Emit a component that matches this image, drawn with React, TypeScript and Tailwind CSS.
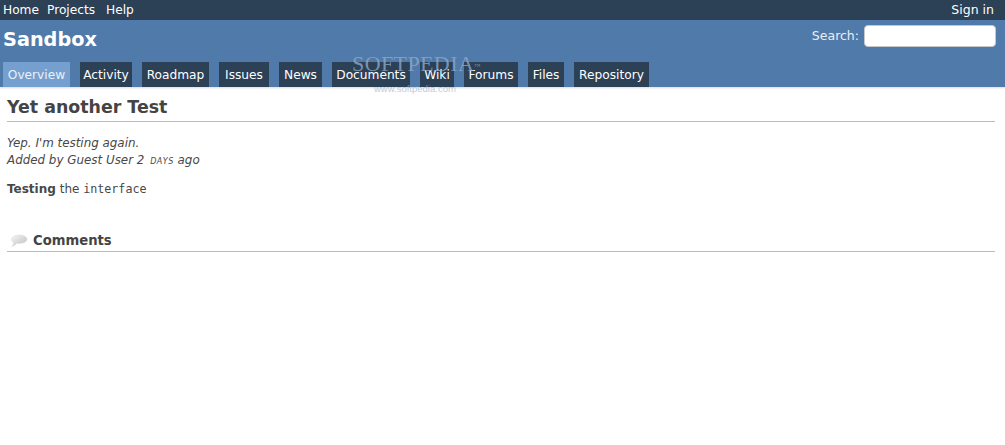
const TOP = [
  { label: "Home", width: "w-[44px]" },
  { label: "Projects", width: "w-[59px]" },
  { label: "Help", width: "w-[30px]" },
]

const TABS = [
  { label: "Overview", width: "w-[67px]", active: true },
  { label: "Activity", width: "w-[52px]" },
  { label: "Roadmap", width: "w-[67px]" },
  { label: "Issues", width: "w-[50px]" },
  { label: "News", width: "w-[43px]" },
  { label: "Documents", width: "w-[78px]" },
  { label: "Wiki", width: "w-[34px]" },
  { label: "Forums", width: "w-[54px]" },
  { label: "Files", width: "w-[36px]" },
  { label: "Repository", width: "w-[75px]" },
]

export default function App() {
  return (
    <div className="relative h-[445px] w-[1005px] overflow-hidden bg-white font-['DejaVu_Sans',sans-serif] text-[#484848]">
      {/* Top menu */}
      <div className="flex h-5 items-center justify-between bg-[#2c4056] pl-[3px] pr-[11px] text-[12.2px] text-white">
        <div className="flex">
          {TOP.map((t) => (
            <a key={t.label} className={t.width}>{t.label}</a>
          ))}
        </div>
        <a className="text-[12.5px]">Sign in</a>
      </div>

      {/* Header */}
      <div className="h-[67px] bg-[#507aaa] pl-[3px] text-white shadow-[0_1px_2px_rgba(0,0,0,0.15)]">
        <div className="flex h-[42px] items-start justify-between pr-[9px]">
          <h1 className="mt-[5px] text-[19.3px] font-bold leading-[30px]">Sandbox</h1>
          <div className="mt-[5px] flex items-center gap-[5px] text-[12.5px]">
            <span className="text-[#e8eef5]">Search:</span>
            <input className="h-[22px] w-[132px] rounded-[4px] border border-[#c8c8c8] bg-white" />
          </div>
        </div>
        <div className="flex gap-[10px]">
          {TABS.map((t) => (
            <a
              key={t.label}
              className={`flex h-[25px] items-center justify-center pt-[1px] text-[12.2px] ${t.width} ${
                t.active ? "bg-[#759fcf] text-[#eaf1f8]" : "bg-[#2c4056] text-white"
              }`}
            >
              {t.label}
            </a>
          ))}
        </div>
      </div>

      {/* Content */}
      <div className="px-[7px] pr-[10px]">
        <h2 className="mt-[8px] border-b border-[#bbb] pb-[2px] text-[17.4px] font-bold leading-[24px] text-[#444]">
          Yet another Test
        </h2>
        <p className="mt-[13px] text-[11.9px] italic leading-[17px]">Yep. I'm testing again.</p>
        <p className="text-[11.9px] italic leading-[17px]">
          Added by Guest User 2 <span className="ml-[2px] text-[8px] uppercase tracking-[0.5px]">days</span> ago
        </p>
        <p className="mt-[11px] text-[12px] leading-[17px]">
          <strong>Testing</strong> the <code className="font-['DejaVu_Sans_Mono',monospace] text-[11.7px]">interface</code>
        </p>
        <h3 className="mt-[34px] flex items-center gap-[5px] border-b border-[#bbb] pb-[1px] text-[13.2px] font-bold leading-[18px] text-[#444]">
          <svg width="18" height="14" viewBox="0 0 18 14" className="ml-[3px]">
            <defs>
              <linearGradient id="bubble" x1="0" y1="0" x2="1" y2="1">
                <stop offset="0" stopColor="#f6f6f6" />
                <stop offset="1" stopColor="#bdbdbd" />
              </linearGradient>
            </defs>
            <path d="M9.5 1C13.6 1 17 2.9 17 5.2S13.6 9.4 9.5 9.4c-.9 0-1.7-.1-2.5-.2C5.8 10.6 4 11.8 1.8 12.4c1-1 1.7-2.2 1.8-3.7C2.2 7.9 1.5 6.6 1.5 5.2 1.5 2.9 5.4 1 9.5 1Z" fill="url(#bubble)" stroke="#d8d8d8" strokeWidth="0.5" />
          </svg>
          Comments
        </h3>
      </div>

      {/* Watermark */}
      <div className="pointer-events-none absolute left-[352px] top-[52px] font-['Liberation_Serif',serif] text-[22px] leading-[24px] tracking-[0.4px] text-[#8fa9c7]/80">
        SOFTPEDIA<sup className="text-[6px]">™</sup>
      </div>
      <div className="pointer-events-none absolute left-[374px] top-[82px] font-['Liberation_Sans',sans-serif] text-[9.5px] text-[#9db3cc]/70">
        www.softpedia.com
      </div>
    </div>
  )
}
